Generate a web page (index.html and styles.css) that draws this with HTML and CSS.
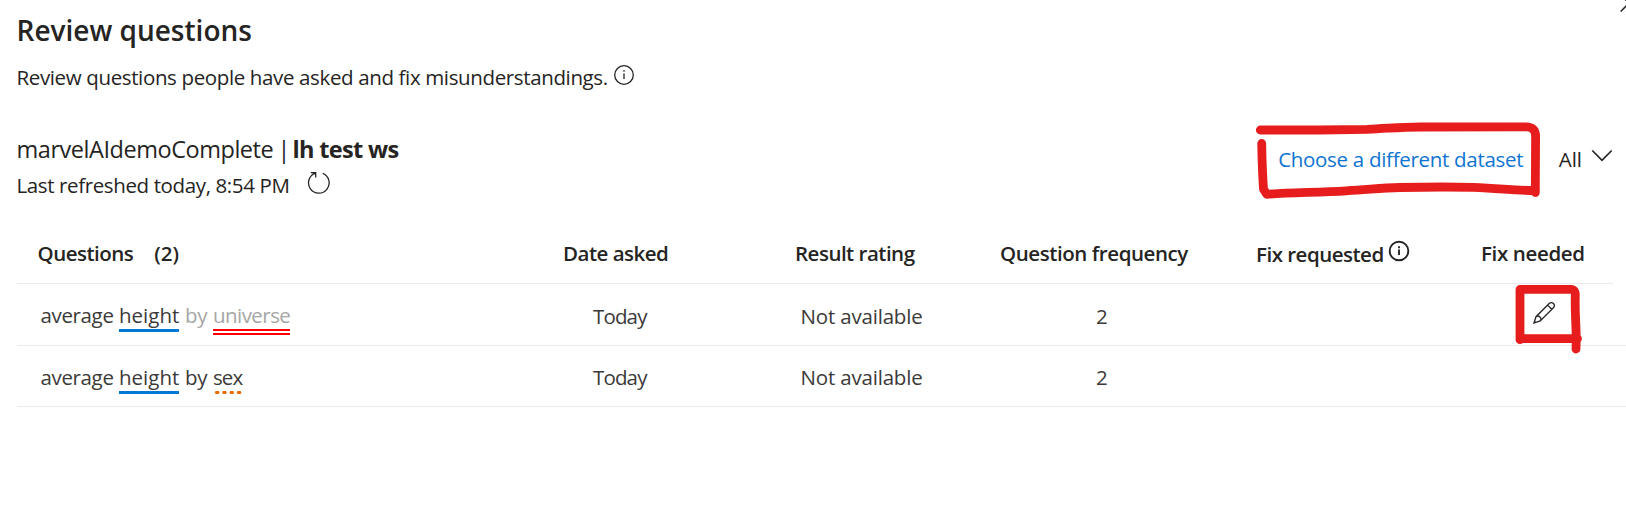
FILE: index.html
```
<!DOCTYPE html>
<html lang="en">
<head>
<meta charset="utf-8">
<title>Review questions</title>
<link rel="stylesheet" href="styles.css">
</head>
<body>
<main class="page">
  <h1 class="title">Review questions</h1>
  <p class="subtitle"><span>Review questions people have asked and fix misunderstandings.</span>
    <svg class="info" width="22" height="22" viewBox="0 0 22 22"><circle cx="11" cy="11" r="9.3"/><path d="M11 9.5V15M11 6.3V7.8"/></svg>
  </p>

  <section class="toolbar">
    <div class="source">
      <div class="dataset"><span class="dataset-name">marvelAIdemoComplete |</span><b class="workspace">lh test ws</b></div>
      <div class="refreshed"><span>Last refreshed today, 8:54 PM</span>
        <svg class="refresh" width="24" height="24" viewBox="0 0 24 24"><path d="M3.8 1.7H8.7V6.6M8.4 2.2A10.3 10.3 0 1 0 15.800 2.400"/></svg>
      </div>
    </div>
    <div class="actions">
      <a class="choose">Choose a different dataset</a>
      <div class="filter">All
        <svg class="chevron" width="22" height="14" viewBox="0 0 22 14"><path d="M1.3 1.5L11 11.3L20.7 1.5"/></svg>
      </div>
    </div>
  </section>

  <section class="table">
    <div class="row head">
      <div class="q-head"><span>Questions</span><span class="count">(2)</span></div>
      <div>Date asked</div>
      <div>Result rating</div>
      <div class="freq-head">Question frequency</div>
      <div class="requested"><span>Fix requested</span>
        <svg class="info bold" width="22" height="22" viewBox="0 0 22 22"><circle cx="11" cy="11" r="9.3"/><path d="M11 9.5V15M11 6.3V8.2"/></svg>
      </div>
      <div class="needed">Fix needed</div>
    </div>
    <div class="row lowered">
      <div class="question"><span class="avg">average</span><span class="field">height</span><span class="faded by">by</span><span class="unknown faded">universe</span></div>
      <div class="date">Today</div>
      <div class="rating">Not available</div>
      <div class="freq">2</div>
      <div></div>
      <div class="edit"><svg class="pencil" width="24" height="24" viewBox="0 0 24 24"><path d="M2 22L4 15.7L17.2 2.5A2.9 2.9 0 0 1 21.4 6.7L8.2 19.9ZM4 15.7A3 3 0 0 1 8.2 19.9M15.6 4.1L19.8 8.3M2.3 20.4L3.6 21.5"/></svg></div>
    </div>
    <div class="row">
      <div class="question"><span class="avg">average</span><span class="field">height</span><span class="by">by</span><span class="maybe">sex</span></div>
      <div class="date">Today</div>
      <div class="rating">Not available</div>
      <div class="freq">2</div>
      <div></div>
      <div></div>
    </div>
  </section>
</main>

<svg class="overlay" width="1626" height="512" viewBox="0 0 1626 512">
  <g class="marker">
    <path d="M1260.300 130H1320L1367 129.300C1390 128.300 1400 127.200 1420 127L1526 126.800Q1535.600 127 1535.600 136L1535.300 192.500"/>
    <path d="M1261.700 143.500C1262 160 1262.500 175 1263.500 189L1266.700 194.300C1290 192.500 1320 192.500 1346 190.800C1370 189.500 1380 188 1400 187.500C1430 186.800 1450 186.800 1473 187.300C1500 188.300 1510 190 1535 190.700"/>
    <path d="M1520 339.700V289.300H1571Q1575.500 289.500 1575.300 295C1574.500 315 1577 330 1576 349M1520.500 338.600H1577.500"/>
  </g>
  <path class="close" d="M1620.700 11.500L1631 1M1625 -1L1626 .5"/>
</svg>
</body>
</html>
```
FILE: styles.css
```
* { box-sizing: border-box; }
body {
  margin: 0;
  width: 1626px;
  height: 512px;
  overflow: hidden;
  background: #fff;
  color: #252423;
  font: 400 20.5px/28px "Open Sans", "Noto Sans", sans-serif;
  white-space: nowrap;
}
svg { display: block; flex: none; fill: none; stroke: #252423; stroke-width: 1.3; }
.page { padding: 11px 0 0 16.500px; }
.title { margin: 0; font-size: 28px; font-weight: 600; line-height: 38px; }
.subtitle { display: flex; margin: 14px 0 0; letter-spacing: -0.365px; }
.subtitle .info { margin-left: 5px; margin-top: 1px; }
.info.bold { stroke-width: 1.9; }

.toolbar { display: flex; justify-content: space-between; margin-top: 42px; padding-right: 13px; }
.source { display: flex; flex-direction: column; gap: 6px; }
.dataset { display: flex; gap: 4px; font-size: 23.5px; line-height: 32px; }
.dataset-name { width: 272px; letter-spacing: -0.46px; word-spacing: -1.5px; }
.workspace { letter-spacing: -0.65px; }
.refreshed { display: flex; letter-spacing: -0.38px; }
.refresh { margin-left: 17px; }
.actions { display: flex; padding-top: 12px; }
.choose { color: #0f74d1; letter-spacing: -0.3px; }
.filter { display: flex; margin-left: 35.500px; gap: 9px; }
.chevron { margin-top: 4px; stroke-width: 1.7; }

.table { margin-top: 40px; }
.row {
  display: grid;
  grid-template-columns: 546.500px 232px 205px 256px 225px 1fr;
  height: 61px;
  padding-top: 17px;
  border-bottom: 1px solid #eaeaea;
  color: #3b3a39;
}
.head { height: 45px; padding-top: 0; margin-right: 13px; color: #252423; font-weight: 600; letter-spacing: -0.5px; }
.q-head { display: flex; gap: 21px; padding-left: 21px; }
.count { letter-spacing: 0; }
.freq-head { letter-spacing: -0.42px; }
.needed { letter-spacing: -0.35px; }
.requested { display: flex; padding-top: 1px; }
.requested .info { margin-left: 4px; }
.question { display: flex; align-items: flex-start; padding-left: 24px; }
.avg { width: 78.500px; letter-spacing: -0.36px; }
.field { width: 60px; border-bottom: 3px solid #0078d4; }
.by { width: 34px; padding-left: 6px; letter-spacing: -0.3px; }
.faded { color: #a6a6a6; }
.unknown { width: 77px; border-bottom: 6px double #f00; letter-spacing: -0.55px; }
.maybe {
  width: 29px;
  height: 32px;
  letter-spacing: -0.9px;
  background: radial-gradient(ellipse 2.5px 2px at 50% 50%, #e66c00 80%, transparent) 0.5px 27px / 7.300px 5px repeat-x;
}
.date { padding-left: 30px; letter-spacing: -0.85px; }
.rating { padding-left: 5.500px; letter-spacing: -0.18px; }
.freq { padding-left: 96px; }
.lowered { height: 62px; }
.lowered .date, .lowered .rating, .lowered .freq { padding-top: 1px; }
.edit { padding: 0 0 0 51px; }

.overlay { position: absolute; top: 0; left: 0; }
.marker { stroke: #e71d1d; stroke-width: 8.8; stroke-linecap: round; stroke-linejoin: round; }
.close { stroke-width: 1.5; }
```
